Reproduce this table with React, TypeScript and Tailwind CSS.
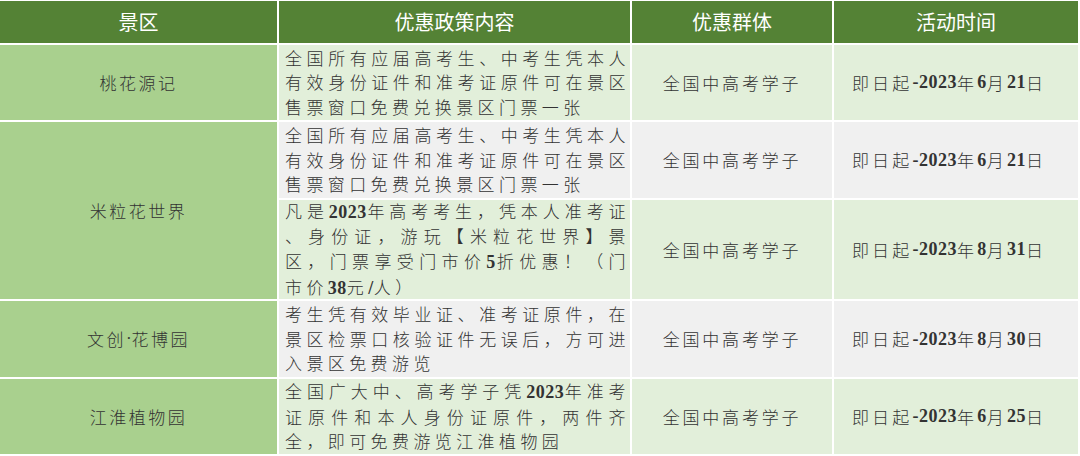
import React from "react"

const GREEN_ROW = "bg-[#e2efda]"
const GRAY_ROW = "bg-[#f0f0f0]"

type Policy = {
  lines: string[]
  date: string
  bg: string
}

type Spot = {
  name: string
  policies: Policy[]
}

const spots: Spot[] = [
  {
    name: "桃花源记",
    policies: [
      {
        lines: ["全国所有应届高考生、中考生凭本人", "有效身份证件和准考证原件可在景区", "售票窗口免费兑换景区门票一张"],
        date: "即日起-2023年6月21日",
        bg: GREEN_ROW,
      },
    ],
  },
  {
    name: "米粒花世界",
    policies: [
      {
        lines: ["全国所有应届高考生、中考生凭本人", "有效身份证件和准考证原件可在景区", "售票窗口免费兑换景区门票一张"],
        date: "即日起-2023年6月21日",
        bg: GRAY_ROW,
      },
      {
        lines: ["凡是2023年高考考生，凭本人准考证", "、身份证，游玩【米粒花世界】景", "区，门票享受门市价5折优惠！（门", "市价38元/人）"],
        date: "即日起-2023年8月31日",
        bg: GREEN_ROW,
      },
    ],
  },
  {
    name: "文创·花博园",
    policies: [
      {
        lines: ["考生凭有效毕业证、准考证原件，在", "景区检票口核验证件无误后，方可进", "入景区免费游览"],
        date: "即日起-2023年8月30日",
        bg: GRAY_ROW,
      },
    ],
  },
  {
    name: "江淮植物园",
    policies: [
      {
        lines: ["全国广大中、高考学子凭2023年准考", "证原件和本人身份证原件，两件齐", "全，即可免费游览江淮植物园"],
        date: "即日起-2023年6月25日",
        bg: GREEN_ROW,
      },
    ],
  },
]

// digits (and the narrow dot / slash / dash) are set in a serif like the source sheet
function Mixed({ text }: { text: string }) {
  const parts = text.split(/([\d/·-]+)/)
  return (
    <>
      {parts.map((p, i) =>
        /^[\d/-]+$/.test(p) ? (
          <span key={i} className="font-['Liberation_Serif',serif] font-bold tracking-[0.5px] text-[18px]">
            {p}
          </span>
        ) : p === "·" ? (
          <span key={i} className="font-['Liberation_Serif',serif] tracking-normal">
            {p}
          </span>
        ) : (
          <span key={i}>{p}</span>
        ),
      )}
    </>
  )
}

export default function App() {
  const headers = ["景区", "优惠政策内容", "优惠群体", "活动时间"]

  return (
    <div className="w-[1080px] h-[456px] bg-white pt-px font-['Noto_Sans_CJK_SC',sans-serif] font-light text-[#333333]">
      <div className="grid grid-cols-[277px_351px_200px_244px] grid-rows-[42px_75px_76px_99px_76px_75px] gap-[2px]">
        {headers.map((h) => (
          <div key={h} className="bg-[#548235] text-white text-[20px] font-normal flex items-center justify-center">
            {h}
          </div>
        ))}

        {spots.map((spot) => (
          <React.Fragment key={spot.name}>
            <div
              className={
                "bg-[#a9d08e] flex items-center justify-center text-[17px] tracking-[2.5px] " +
                (spot.policies.length > 1 ? "row-span-2" : "")
              }
            >
              <Mixed text={spot.name} />
            </div>
            {spot.policies.map((p, idx) => (
              <React.Fragment key={idx}>
                <div className={p.bg + " flex flex-col justify-center pl-[6px] text-[17px] leading-[24.6px] tracking-[4.4px]"}>
                  {p.lines.map((line, li) => (
                    <div
                      key={li}
                      className={
                        li < p.lines.length - 1 ? "text-justify [text-align-last:justify] whitespace-nowrap" : "whitespace-nowrap"
                      }
                    >
                      <Mixed text={line} />
                    </div>
                  ))}
                </div>
                <div className={p.bg + " flex items-center justify-center text-[17px] tracking-[2.8px]"}>全国中高考学子</div>
                <div className={p.bg + " flex items-center justify-center pr-[14px] text-[17px] tracking-[3.2px]"}>
                  <Mixed text={p.date} />
                </div>
              </React.Fragment>
            ))}
          </React.Fragment>
        ))}
      </div>
    </div>
  )
}
